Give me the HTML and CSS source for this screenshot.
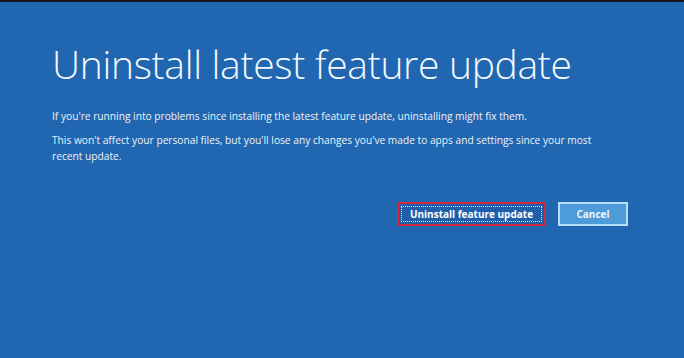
FILE: index.html
```html
<!DOCTYPE html>
<html>
<head>
  <meta charset="UTF-8">
  <title>Uninstall latest feature update</title>
  <link rel="stylesheet" href="styles.css">
</head>
<body>
  <div class="screen">
    <h1 class="title">Uninstall latest feature update</h1>
    <div class="desc">
      <p>If you're running into problems since installing the latest feature update, uninstalling might fix them.</p>
      <p>This won't affect your personal files, but you'll lose any changes you've made to apps and settings since your most recent update.</p>
    </div>
    <div class="actions">
      <button class="btn btn-primary"><span>Uninstall feature update</span></button>
      <button class="btn btn-cancel">Cancel</button>
    </div>
  </div>
</body>
</html>
```

FILE: styles.css
```css
* { box-sizing: border-box; }
html, body { height: 100%; }
body { margin: 0; background: #2066b0; border-top: 2px solid #14161c; font-family: "Open Sans", "Liberation Sans", sans-serif; color: #fff; }
.screen { padding: 36px 56px 0 52px; }
.title { margin: 0; font-weight: 300; font-size: 39px; line-height: 52px; letter-spacing: -0.3px; color: #f4f8fc; }
.desc { margin-top: 18px; font-size: 10.2px; line-height: 16px; color: #eef3f9; }
.desc p { margin: 0 0 8px; max-width: 556px; }
.actions { display: flex; justify-content: flex-end; gap: 12px; margin-top: 38px; }
.btn { height: 24px; font-family: inherit; font-weight: 700; font-size: 10px; color: #fff; cursor: pointer; padding: 0; }
.btn-primary { width: 149px; background: #1f5fa9; border: 2px solid #d12a3e; padding: 2px; }
.btn-primary span { display: flex; align-items: center; justify-content: center; height: 100%; border: 1px dotted #dfe9f5; }
.btn-cancel { width: 70px; background: #4d9bd8; border: 2px solid #b8ddf6; color: #f1f7fc; }
```
